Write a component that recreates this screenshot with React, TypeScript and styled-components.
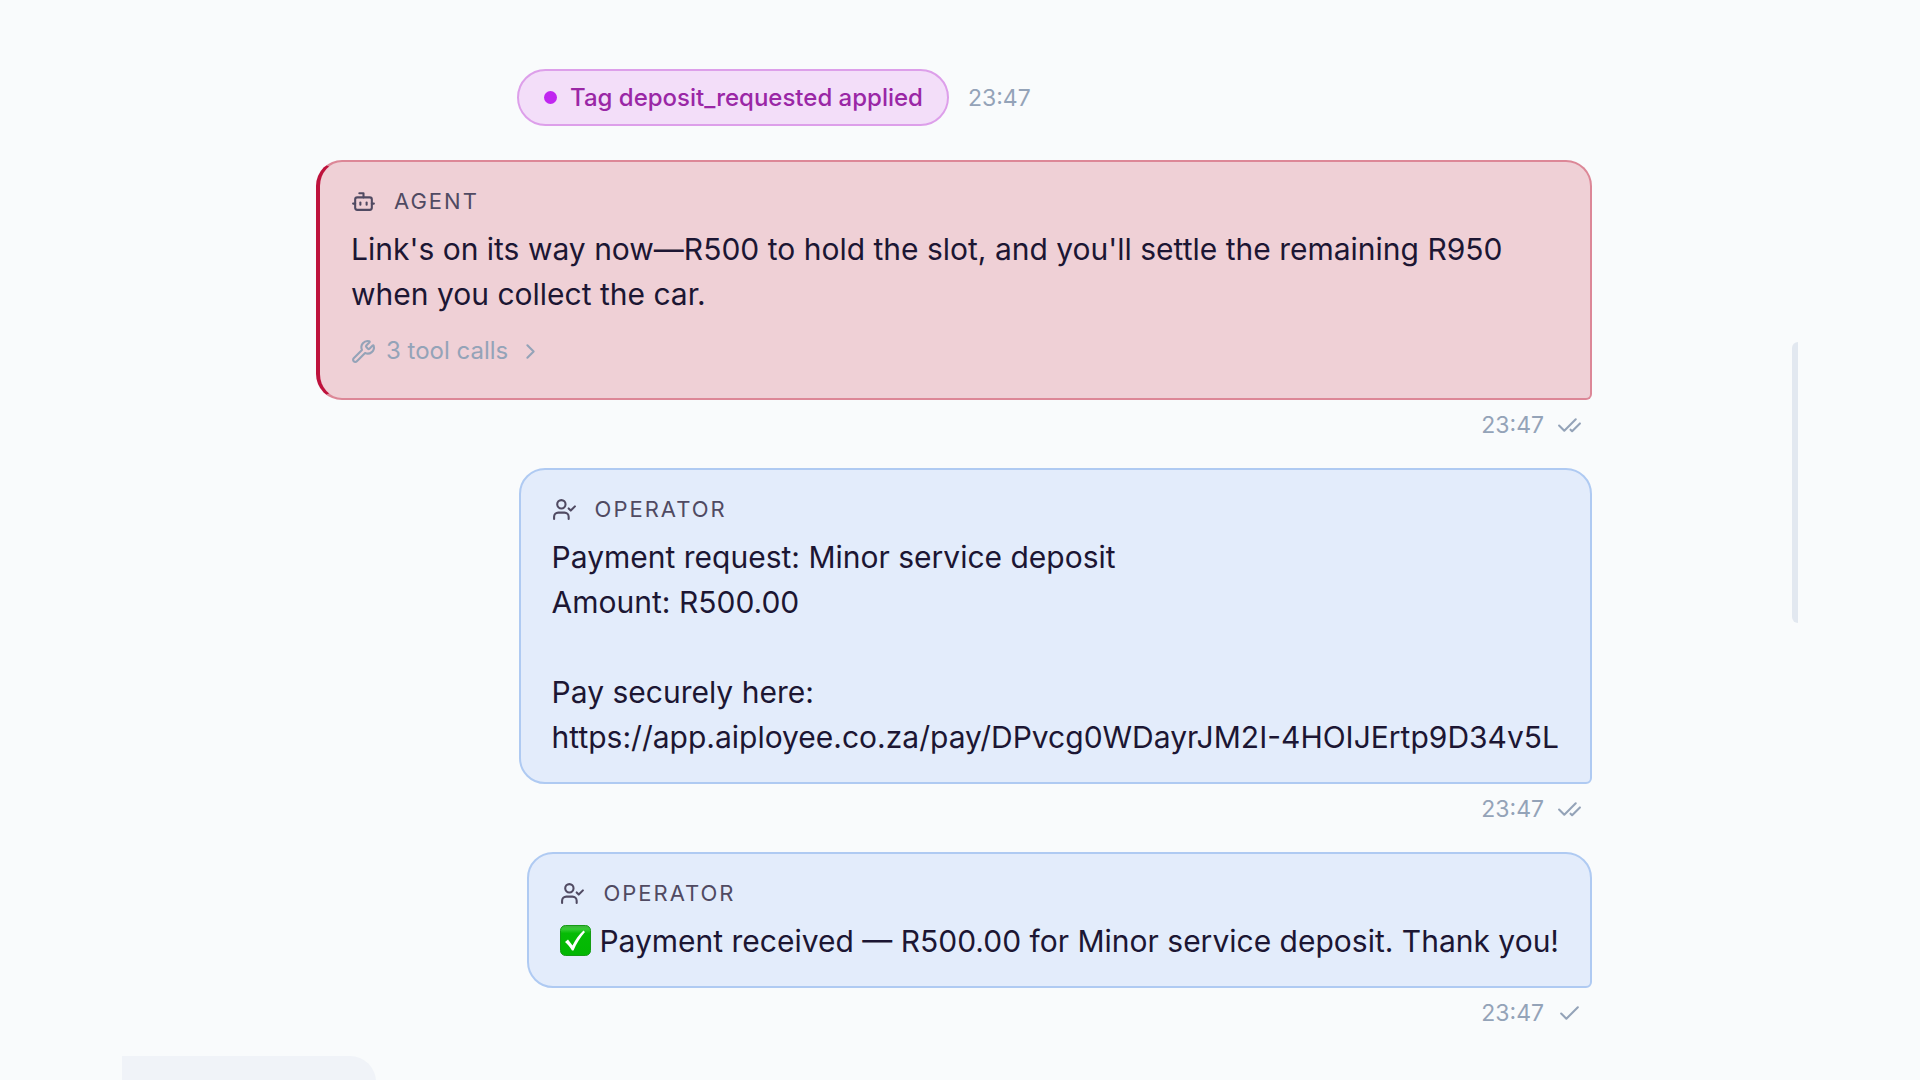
import React from "react";
import styled, { createGlobalStyle, css } from "styled-components";
import { Bot, Check, CheckCheck, ChevronRight, UserCheck, Wrench } from "lucide-react";

const GlobalStyle = createGlobalStyle`
  *, *::before, *::after { box-sizing: border-box; }
  html { overflow: hidden; }
  body {
    margin: 0;
    background: #f9fbfc;
    font-family: Inter, "Liberation Sans", sans-serif;
    -webkit-font-smoothing: antialiased;
  }
`;

const Panel = styled.main`
  display: flex;
  height: 100vh;
  overflow: hidden;
  padding: 0 122px;
`;

const Thread = styled.section`
  flex: 1;
  min-width: 0;
  display: flex;
  flex-direction: column;
  align-items: flex-end;
  padding: 69px 200px 0 0;
`;

const ScrollTrack = styled.div`
  flex: none;
  width: 6px;
  padding-top: 342px;
`;

const ScrollThumb = styled.div`
  height: 281px;
  border-radius: 6px 0 0 6px;
  background: #e2e8f0;
`;

const EventRow = styled.div`
  align-self: stretch;
  display: flex;
  align-items: center;
  gap: 19px;
  margin: 0 0 34px 395px;
`;

const TagPill = styled.div`
  display: flex;
  align-items: center;
  gap: 13px;
  height: 57px;
  padding: 0 24px 0 25px;
  border: 2px solid #dd9fea;
  border-radius: 29px;
  background: #f3def9;
  color: #9a27a6;
  font-size: 24px;
  font-weight: 500;
  white-space: nowrap;
`;

const Dot = styled.span`
  width: 13px;
  height: 13px;
  border-radius: 50%;
  background: #c026f0;
`;

const Time = styled.time`
  color: #94a3b8;
  font-size: 23px;
  line-height: 32px;
`;

const Message = styled.article`
  flex: none;
  display: flex;
  flex-direction: column;
  align-items: flex-end;
  max-width: 1276px;
`;

const agentTone = css`
  border-color: #dc8797;
  border-left: 4px solid #be123c;
  background: #efd0d6;
`;

const operatorTone = css`
  border-color: #afcaf2;
  background: #e3ecfb;
`;

const Bubble = styled.div<{ $from: "agent" | "operator" }>`
  padding: 23px 31px 22px;
  border: 2px solid;
  border-radius: 26px 26px 6px 26px;
  color: #1c1633;
  ${(p) => (p.$from === "agent" ? agentTone : operatorTone)}
`;

const Sender = styled.header`
  display: flex;
  align-items: center;
  gap: 18px;
  margin-bottom: 10px;
  color: #504a62;
  font-size: 22px;
  line-height: 32px;
  letter-spacing: 2px;
`;

const Body = styled.p`
  margin: 0;
  font-size: 30px;
  line-height: 45px;
  white-space: pre-line;
  overflow-wrap: anywhere;
`;

const PayLink = styled.a`
  color: inherit;
  text-decoration: none;
`;

const ToolCalls = styled.button`
  display: flex;
  align-items: center;
  gap: 10px;
  margin: 18px 0 9px;
  padding: 0;
  border: 0;
  background: none;
  color: #94a3b8;
  font: 400 24px/32px Inter, "Liberation Sans", sans-serif;
`;

const Meta = styled.footer`
  display: flex;
  align-items: center;
  gap: 13px;
  padding: 9px 10px 27px 0;
  color: #94a3b8;
`;

const Emoji = styled.svg`
  width: 31px;
  height: 31px;
  margin-right: 8px;
  vertical-align: -4px;
`;

const IncomingBubble = styled.div`
  flex: none;
  align-self: flex-start;
  width: 254px;
  height: 96px;
  border-radius: 0 26px 26px 6px;
  background: #f0f3f8;
`;

function CheckEmoji() {
  return (
    <Emoji viewBox="0 0 31 31" aria-hidden="true">
      <defs>
        <linearGradient id="tick-face" x1="0" y1="0" x2="0" y2="1">
          <stop offset="0" stopColor="#3fae3c" />
          <stop offset="0.12" stopColor="#35cc33" />
          <stop offset="0.26" stopColor="#06bb05" />
          <stop offset="1" stopColor="#03b703" />
        </linearGradient>
      </defs>
      <rect x="0.5" y="0.5" width="30" height="30" rx="5" fill="url(#tick-face)" stroke="#159c15" />
      <path d="M5 17 L8 14.5 L12.5 20.5 C15.5 14.5 19 9.500 23.500 5.500 L25 7 C20.500 12 16.500 18.500 13.500 25.500 L12 25.500 C10 22 7.500 19 5 17 Z" fill="#fff" />
    </Emoji>
  );
}

type MessageProps = {
  from: "agent" | "operator";
  read?: boolean;
  children: React.ReactNode;
};

function ChatMessage({ from, read = false, children }: MessageProps) {
  const SenderIcon = from === "agent" ? Bot : UserCheck;
  const StatusIcon = read ? CheckCheck : Check;
  return (
    <Message>
      <Bubble $from={from}>
        <Sender>
          <SenderIcon size={25} strokeWidth={2} />
          <span>{from === "agent" ? "AGENT" : "OPERATOR"}</span>
        </Sender>
        {children}
      </Bubble>
      <Meta>
        <Time>23:47</Time>
        <StatusIcon size={25} strokeWidth={2} />
      </Meta>
    </Message>
  );
}

const payUrl = "https://app.aiployee.co.za/pay/DPvcg0WDayrJM2I-4HOIJErtp9D34v5L";

export default function App() {
  return (
    <>
      <GlobalStyle />
      <Panel>
        <Thread>
          <EventRow>
            <TagPill>
              <Dot />
              <span>Tag deposit_requested applied</span>
            </TagPill>
            <Time>23:47</Time>
          </EventRow>

          <ChatMessage from="agent" read>
            <Body>
              Link's on its way now—R500 to hold the slot, and you'll settle the remaining R950 when you collect the car.
            </Body>
            <ToolCalls type="button">
              <Wrench size={25} strokeWidth={2} />
              <span>3 tool calls</span>
              <ChevronRight size={25} strokeWidth={2} />
            </ToolCalls>
          </ChatMessage>

          <ChatMessage from="operator" read>
            <Body>
              {"Payment request: Minor service deposit\nAmount: R500.00\n\nPay securely here:\n"}
              <PayLink href={payUrl}>{payUrl}</PayLink>
            </Body>
          </ChatMessage>

          <ChatMessage from="operator">
            <Body>
              <CheckEmoji />
              Payment received — R500.00 for Minor service deposit. Thank you!
            </Body>
          </ChatMessage>

          <IncomingBubble />
        </Thread>
        <ScrollTrack>
          <ScrollThumb />
        </ScrollTrack>
      </Panel>
    </>
  );
}
